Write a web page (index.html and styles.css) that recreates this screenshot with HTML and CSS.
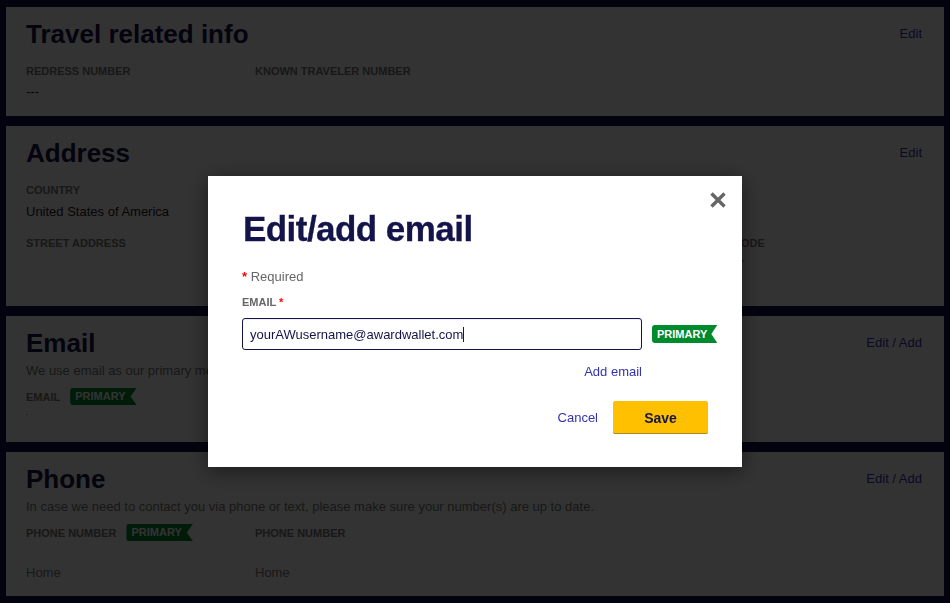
FILE: index.html
```html
<!DOCTYPE html>
<html lang="en">
<head>
  <meta charset="UTF-8">
  <title>Edit/add email</title>
  <link rel="stylesheet" href="styles.css">
</head>
<body>
<div class="page">
  <section class="card card-travel">
    <div class="card-head">
      <h2>Travel related info</h2>
      <a class="edit" href="#">Edit</a>
    </div>
    <div class="fields fields-travel">
      <div class="field">
        <div class="label">REDRESS NUMBER</div>
        <div class="value">---</div>
      </div>
      <div class="field">
        <div class="label">KNOWN TRAVELER NUMBER</div>
      </div>
    </div>
  </section>

  <section class="card card-address">
    <div class="card-head">
      <h2>Address</h2>
      <a class="edit" href="#">Edit</a>
    </div>
    <div class="fields fields-country">
      <div class="field">
        <div class="label">COUNTRY</div>
        <div class="value value-country">United States of America</div>
      </div>
    </div>
    <div class="fields fields-street">
      <div class="field">
        <div class="label">STREET ADDRESS</div>
      </div>
      <div class="field"></div>
      <div class="field"></div>
      <div class="field">
        <div class="label">ZIP CODE</div>
        <div class="value value-country value-zip">1007</div>
      </div>
    </div>
  </section>

  <section class="card card-email">
    <div class="card-head">
      <h2>Email</h2>
      <a class="edit" href="#">Edit / Add</a>
    </div>
    <p class="note">We use email as our primary means of contact, so please make sure that your email address stays correct and up to date.</p>
    <div class="fields">
      <div class="field">
        <div class="label">EMAIL <span class="ribbon">PRIMARY</span></div>
        <div class="value value-tiny">.</div>
      </div>
    </div>
  </section>

  <section class="card card-phone">
    <div class="card-head">
      <h2>Phone</h2>
      <a class="edit" href="#">Edit / Add</a>
    </div>
    <p class="note">In case we need to contact you via phone or text, please make sure your number(s) are up to date.</p>
    <div class="fields">
      <div class="field">
        <div class="label">PHONE NUMBER <span class="ribbon">PRIMARY</span></div>
        <div class="value value-home">Home</div>
      </div>
      <div class="field">
        <div class="label">PHONE NUMBER</div>
        <div class="value value-home">Home</div>
      </div>
    </div>
  </section>
</div>

<div class="overlay">
  <div class="modal">
    <button class="close" aria-label="Close">
      <svg width="18" height="18" viewBox="0 0 18 18"><path d="M2.5 2.5 L15.5 15.5 M15.5 2.5 L2.5 15.5" stroke="#666" stroke-width="3.4" fill="none"/></svg>
    </button>
    <h1>Edit/add email</h1>
    <div class="required"><span class="star">*</span> Required</div>
    <div class="modal-label">EMAIL <span class="star">*</span></div>
    <div class="email-row">
      <div class="input"><span>yourAWusername@awardwallet.com</span><i class="caret"></i></div>
      <span class="ribbon ribbon-bright">PRIMARY</span>
    </div>
    <div class="add-row"><a href="#">Add email</a></div>
    <div class="actions">
      <a class="cancel" href="#">Cancel</a>
      <button class="save">Save</button>
    </div>
  </div>
</div>
</body>
</html>
```

FILE: styles.css
```css
* {
  margin: 0;
  padding: 0;
  box-sizing: border-box;
}

html, body {
  height: 100%;
  overflow: hidden;
}

body {
  background: #12124b;
  font-family: "Liberation Sans", Arial, sans-serif;
  color: #14144b;
}

a {
  text-decoration: none;
}

.page {
  display: flex;
  flex-direction: column;
  gap: 10px;
  padding: 7px 6px;
}

.card {
  background: #fff;
  padding: 12px 22px 0 20px;
}

.card-travel { height: 109px; }
.card-address { height: 180px; }
.card-email { height: 126px; }
.card-phone { height: 144px; }

.card-head {
  display: flex;
  justify-content: space-between;
  align-items: center;
}

.card-head h2 {
  font-size: 26px;
  line-height: 30px;
  font-weight: 700;
  color: #14144b;
}

.edit {
  font-size: 13px;
  margin-bottom: 2px;
  color: #3333b0;
}

.note {
  font-size: 13px;
  line-height: 16px;
  color: #777;
  margin-top: 5px;
  white-space: nowrap;
}

.fields {
  display: grid;
  grid-template-columns: repeat(4, 229px);
}

.fields-travel { margin-top: 13px; }
.fields-country { margin-top: 13px; }
.fields-street { margin-top: 14px; }
.card-email .fields { margin-top: 9px; }
.card-phone .fields { margin-top: 9px; }

.label {
  display: flex;
  align-items: center;
  gap: 10px;
  height: 17px;
  font-size: 11px;
  font-weight: 700;
  color: #777;
}

.value {
  font-size: 13px;
  line-height: 16px;
  color: #222;
  margin-top: 5px;
}

.value-country {
  margin-top: 6px;
}

.value-zip {
  letter-spacing: 0.5px;
}

.value-tiny {
  font-size: 8px;
  line-height: 8px;
  margin-top: 4px;
}

.value-home {
  color: #777;
  margin-top: 24px;
}

.ribbon {
  display: inline-block;
  height: 17px;
  line-height: 17px;
  padding: 0 11px 0 5px;
  font-size: 11px;
  font-weight: 700;
  color: #fff;
  background: #008a2e;
  border-radius: 3px 0 0 3px;
  clip-path: polygon(0 0, 100% 0, calc(100% - 6px) 50%, 100% 100%, 0 100%);
}

.ribbon-bright {
  flex: none;
  height: 18px;
  line-height: 18px;
  padding-right: 10px;
}

.overlay {
  position: fixed;
  top: 0;
  left: 0;
  right: 0;
  bottom: 0;
  background: rgba(0, 0, 0, 0.8);
  display: flex;
  justify-content: center;
  align-items: flex-start;
  padding-top: 176px;
}

.modal {
  position: relative;
  width: 534px;
  height: 291px;
  background: #fff;
  padding: 33px 34px 0 34px;
  box-shadow: 0 4px 20px rgba(0, 0, 0, 0.5);
}

.close {
  position: absolute;
  top: 15px;
  right: 15px;
  width: 18px;
  height: 18px;
  border: 0;
  background: none;
}

.close svg {
  display: block;
}

.modal h1 {
  padding-left: 1px;
  font-size: 35px;
  line-height: 40px;
  font-weight: 700;
  letter-spacing: -0.55px;
  -webkit-text-stroke: 0.3px #14144b;
  color: #14144b;
}

.required {
  font-size: 13px;
  line-height: 16px;
  color: #666;
  margin-top: 20px;
}

.star {
  color: #f00;
  font-weight: 700;
}

.modal-label {
  font-size: 11px;
  line-height: 14px;
  font-weight: 700;
  color: #666;
  margin-top: 10px;
}

.email-row {
  display: flex;
  align-items: center;
  gap: 10px;
  margin-top: 9px;
}

.input {
  display: flex;
  align-items: center;
  flex: none;
  width: 400px;
  height: 32px;
  padding: 0 7px;
  border: 1px solid #14144b;
  border-radius: 3px;
  box-shadow: inset 0 1px 1px #eee;
  font-size: 13px;
  color: #14144b;
}

.caret {
  width: 1px;
  height: 15px;
  background: #14144b;
}

.add-row {
  width: 400px;
  text-align: right;
  margin-top: 14px;
  font-size: 13px;
  line-height: 16px;
}

.add-row a, .cancel {
  color: #3333b0;
}

.actions {
  display: flex;
  justify-content: flex-end;
  align-items: center;
  gap: 15px;
  margin-top: 21px;
  font-size: 13px;
}

.save {
  width: 95px;
  height: 33px;
  padding-top: 1px;
  border: 0;
  border-bottom: 1px solid #a88a20;
  border-radius: 2px;
  background: #ffc000;
  font-family: inherit;
  font-size: 14px;
  font-weight: 700;
  color: #14144b;
}
```
